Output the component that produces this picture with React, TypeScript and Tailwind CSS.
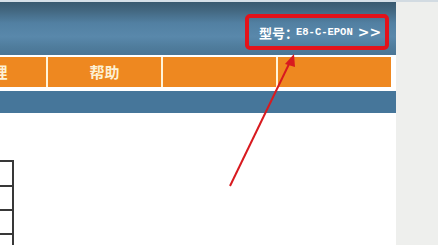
import React from "react";

export default function App() {
  return (
    <div className="relative flex w-[438px] h-[245px] overflow-hidden bg-white" style={{ fontFamily: '"Noto Sans CJK SC", "Liberation Sans", sans-serif' }}>
      <div className="flex flex-col w-[396px] h-full bg-white overflow-hidden">
        <div className="shrink-0 h-[2px] bg-[#d6e0e8]" />
        <div className="shrink-0 flex justify-end items-start h-[53px] pr-[7px] pt-[12px] bg-[linear-gradient(to_bottom,#395a70_0%,#42667f_15%,#5280a2_40%,#5988ab_65%,#4f7c9c_85%,#4a7595_100%)]">
          <div className="flex items-center w-[144px] h-[36px] rounded-[5px] border-[4px] border-[#e3121a] pl-[10px]">
            <span className="text-[13px] font-bold text-white leading-none">型号：</span>
            <span className="text-[10.5px] font-bold text-white leading-none -ml-[2px]" style={{ fontFamily: '"Liberation Mono", monospace' }}>E8-C-EPON</span>
            <span className="ml-[5px] text-[14px] font-bold text-white leading-none" style={{ fontFamily: '"DejaVu Sans", sans-serif' }}>&gt;&gt;</span>
          </div>
        </div>
        <div className="shrink-0 h-[2px] bg-white" />
        <div className="shrink-0 flex h-[30px] bg-white overflow-hidden">
          <div className="shrink-0 w-[113px] -ml-[67px] flex items-center justify-center bg-[#ee8820] text-[15px] font-bold text-[#fdf1d4] pl-[6px]">管理</div>
          <div className="shrink-0 w-[115px] flex items-center justify-center bg-[#ee8820] border-l-2 border-[#fff4da] text-[15px] font-bold text-[#fdf1d4]">帮助</div>
          <div className="shrink-0 w-[115px] bg-[#ee8820] border-l-2 border-[#fff4da]" />
          <div className="shrink-0 w-[115px] bg-[#ee8820] border-l-2 border-[#fff4da]" />
        </div>
        <div className="shrink-0 h-[4px] bg-white" />
        <div className="shrink-0 h-[22px] bg-[#46769a]" />
        <div className="flex-1 min-h-0 bg-white pt-[47px]">
          <div className="flex flex-col w-[14px]">
            <div className="shrink-0 h-[25px] border-t-2 border-r-2 border-[#383838]" />
            <div className="shrink-0 h-[24px] border-t-2 border-r-2 border-[#383838]" />
            <div className="shrink-0 h-[24px] border-t-2 border-r-2 border-[#383838]" />
            <div className="shrink-0 h-[24px] border-t-2 border-r-2 border-[#383838]" />
          </div>
        </div>
      </div>
      <div className="flex-1 h-full bg-[#eeefed] border-t-2 border-[#d2dbe2]" />
      <svg className="absolute left-0 top-0 pointer-events-none" width="438" height="245" viewBox="0 0 438 245">
        <line x1="230" y1="186" x2="290" y2="62" stroke="#d81a1f" strokeWidth="2" />
        <polygon points="294,54 285,64 295,67" fill="#d81a1f" />
      </svg>
    </div>
  );
}
